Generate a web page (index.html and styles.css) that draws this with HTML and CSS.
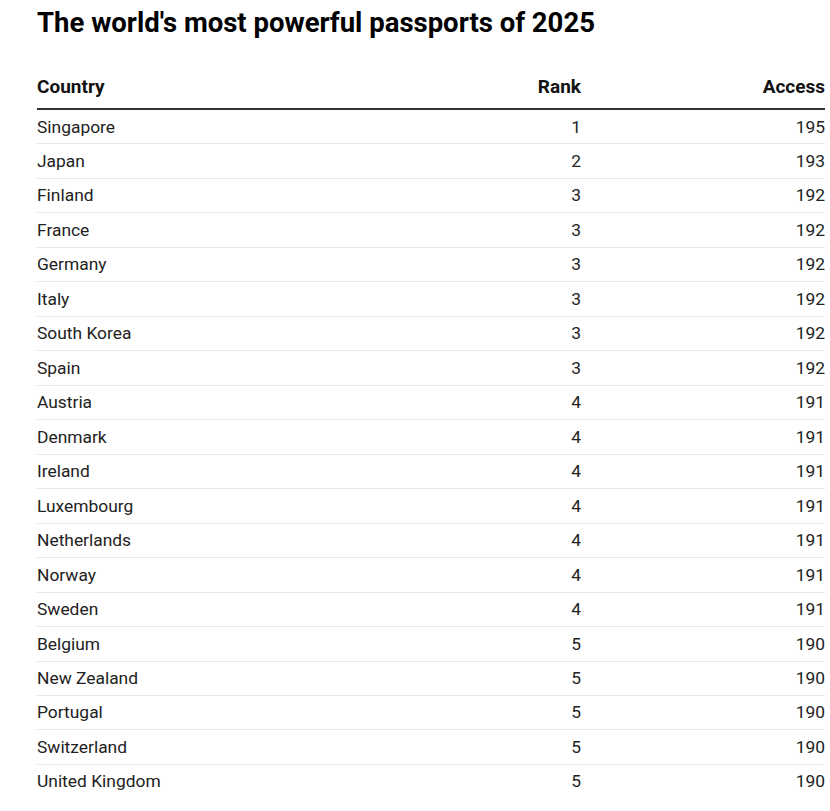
FILE: index.html
```html
<!DOCTYPE html>
<html>
<head>
<meta charset="utf-8">
<link rel="stylesheet" href="styles.css">
</head>
<body>
<div class="wrap">
<h1 class="title">The world's most powerful passports of 2025</h1>
<table class="tbl">
<thead>
<tr><th class="c-country">Country</th><th class="c-rank">Rank</th><th class="c-access">Access</th></tr>
</thead>
<tbody>
<tr><td>Singapore</td><td class="num">1</td><td class="num">195</td></tr>
<tr><td>Japan</td><td class="num">2</td><td class="num">193</td></tr>
<tr><td>Finland</td><td class="num">3</td><td class="num">192</td></tr>
<tr><td>France</td><td class="num">3</td><td class="num">192</td></tr>
<tr><td>Germany</td><td class="num">3</td><td class="num">192</td></tr>
<tr><td>Italy</td><td class="num">3</td><td class="num">192</td></tr>
<tr><td>South Korea</td><td class="num">3</td><td class="num">192</td></tr>
<tr><td>Spain</td><td class="num">3</td><td class="num">192</td></tr>
<tr><td>Austria</td><td class="num">4</td><td class="num">191</td></tr>
<tr><td>Denmark</td><td class="num">4</td><td class="num">191</td></tr>
<tr><td>Ireland</td><td class="num">4</td><td class="num">191</td></tr>
<tr><td>Luxembourg</td><td class="num">4</td><td class="num">191</td></tr>
<tr><td>Netherlands</td><td class="num">4</td><td class="num">191</td></tr>
<tr><td>Norway</td><td class="num">4</td><td class="num">191</td></tr>
<tr><td>Sweden</td><td class="num">4</td><td class="num">191</td></tr>
<tr><td>Belgium</td><td class="num">5</td><td class="num">190</td></tr>
<tr><td>New Zealand</td><td class="num">5</td><td class="num">190</td></tr>
<tr><td>Portugal</td><td class="num">5</td><td class="num">190</td></tr>
<tr><td>Switzerland</td><td class="num">5</td><td class="num">190</td></tr>
<tr><td>United Kingdom</td><td class="num">5</td><td class="num">190</td></tr>
</tbody>
</table>
</div>
</body>
</html>
```
FILE: styles.css
```css
html, body {
  margin: 0;
  padding: 0;
  background: #fff;
}
body {
  font-family: Roboto, "Liberation Sans", sans-serif;
  color: #222;
}
.wrap {
  padding: 0 5px 0 37px;
}
.title {
  margin: 7px 0 0 0;
  font-size: 27.5px;
  font-weight: 700;
  line-height: 32px;
  color: #000;
}
.tbl {
  width: 788px;
  margin-top: 37px;
  border-collapse: collapse;
  font-size: 17.4px;
}
.tbl th {
  font-size: 19px;
  font-weight: 700;
  padding: 0 0 10px 0;
  line-height: 22px;
  border-bottom: 2px solid #333;
  color: #121212;
}
.c-country { text-align: left; }
.c-rank { text-align: right; width: 170px; }
.c-access { text-align: right; width: 244px; }
.tbl td {
  padding: 6.5px 0 6.5px 0;
  line-height: 20.47px;
  border-bottom: 1px solid #e6e6e6;
}
.tbl tbody tr:last-child td {
  border-bottom: none;
}
.num { text-align: right; }
```
